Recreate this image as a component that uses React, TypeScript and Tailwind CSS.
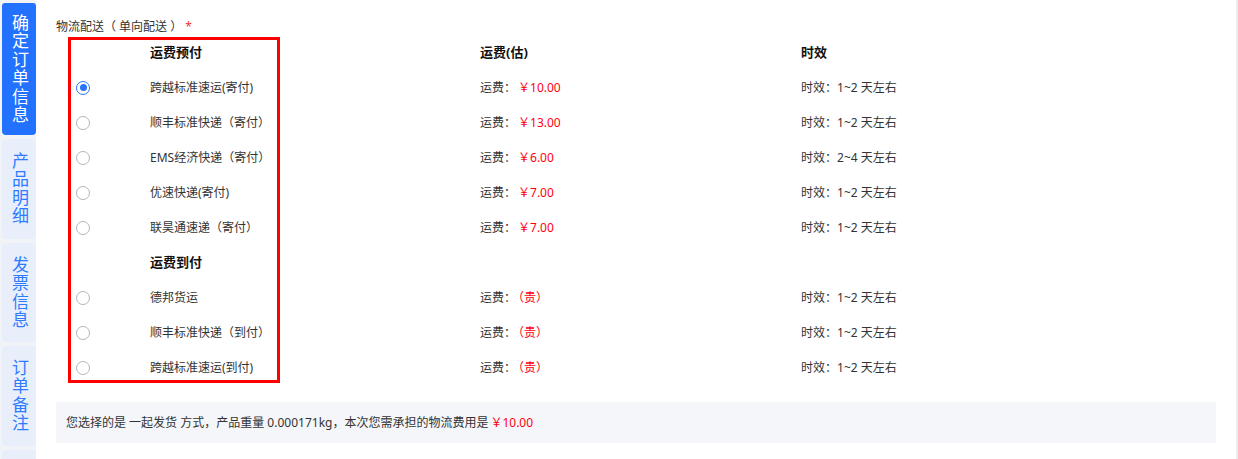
import React from 'react'

const tabs = [
  { label: '确定订单信息', active: true, h: 'h-[132px]' },
  { label: '产品明细', active: false, h: 'h-[100px]' },
  { label: '发票信息', active: false, h: 'h-[99px]' },
  { label: '订单备注', active: false, h: 'h-[100px]' },
  { label: '', active: false, h: 'h-[40px]' },
]

type Row =
  | { kind: 'group'; title: string; withHead?: boolean }
  | { kind: 'item'; name: string; price: string; time: string; checked?: boolean }

const rows: Row[] = [
  { kind: 'group', title: '运费预付', withHead: true },
  { kind: 'item', name: '跨越标准速运(寄付)', price: '￥10.00', time: '1~2 天左右', checked: true },
  { kind: 'item', name: '顺丰标准快递（寄付）', price: '￥13.00', time: '1~2 天左右' },
  { kind: 'item', name: 'EMS经济快递（寄付）', price: '￥6.00', time: '2~4 天左右' },
  { kind: 'item', name: '优速快递(寄付)', price: '￥7.00', time: '1~2 天左右' },
  { kind: 'item', name: '联昊通速递（寄付）', price: '￥7.00', time: '1~2 天左右' },
  { kind: 'group', title: '运费到付' },
  { kind: 'item', name: '德邦货运', price: '（贵）', time: '1~2 天左右' },
  { kind: 'item', name: '顺丰标准快递（到付）', price: '（贵）', time: '1~2 天左右' },
  { kind: 'item', name: '跨越标准速运(到付)', price: '（贵）', time: '1~2 天左右' },
]

function Radio({ checked }: { checked?: boolean }) {
  return checked ? (
    <span className="flex items-center justify-center w-[14px] h-[14px] rounded-full border border-[#2a73ff] bg-white">
      <span className="w-[7px] h-[7px] rounded-full bg-[#2a73ff]" />
    </span>
  ) : (
    <span className="block w-[14px] h-[14px] rounded-full border border-[#b5b5b5] bg-white" />
  )
}

export default function App() {
  return (
    <div className="flex w-[1238px] h-[459px] overflow-hidden bg-white text-[12px] text-[#333] font-['Noto_Sans','Noto_Sans_CJK_SC',sans-serif]">
      {/* Side tabs */}
      <div className="w-[36px] shrink-0 bg-[#f1f3f6] pl-[2px] pt-[3px] flex flex-col gap-[4px]">
        {tabs.map((t, i) => (
          <div
            key={i}
            className={`${t.h} shrink-0 flex items-center justify-center rounded-b-[4px] rounded-t-[3px] ${
              t.active ? 'bg-[#2271ff] text-white' : 'bg-[#e8effb] text-[#2f7bff]'
            }`}
          >
            {t.label && (
              <span className="[writing-mode:vertical-rl] text-[17px] leading-[20px] tracking-[1.5px]">
                {t.label}
              </span>
            )}
          </div>
        ))}
      </div>

      {/* Main */}
      <div className="flex-1 pl-[20px] pr-[20px] pt-[19px]">
        <div className="leading-[16px]">
          物流配送（ 单向配送 ）<span className="text-[#f33] ml-[3px]">*</span>
        </div>

        <div className="relative ml-[14px]">
          {rows.map((r, i) =>
            r.kind === 'group' ? (
              <div key={i} className="grid grid-cols-[80px_330px_321px_1fr] h-[35px] items-center font-bold text-[13px] text-[#111]">
                <span />
                <span>{r.title}</span>
                <span>{r.withHead ? '运费(估)' : ''}</span>
                <span>{r.withHead ? '时效' : ''}</span>
              </div>
            ) : (
              <div key={i} className="grid grid-cols-[80px_330px_321px_1fr] h-[35px] items-center">
                <span className="pl-[6px]">
                  <Radio checked={r.checked} />
                </span>
                <span>{r.name}</span>
                <span>
                  运费：<span className="text-[#f01] ml-[2px]">{r.price}</span>
                </span>
                <span>时效：{r.time}</span>
              </div>
            )
          )}
          {/* highlight annotation */}
          <div className="absolute left-[-2px] top-[2px] w-[212px] h-[346px] border-[3px] border-[#f00] pointer-events-none" />
        </div>

        <div className="mt-[17px] h-[41px] bg-[#f5f6fa] flex items-center pl-[10px]">
          您选择的是 一起发货 方式，产品重量 0.000171kg，本次您需承担的物流费用是
          <span className="text-[#f01] ml-[2px]">￥10.00</span>
        </div>
      </div>
      <div className="w-[2px] shrink-0 bg-[#ececec]" />
    </div>
  )
}
